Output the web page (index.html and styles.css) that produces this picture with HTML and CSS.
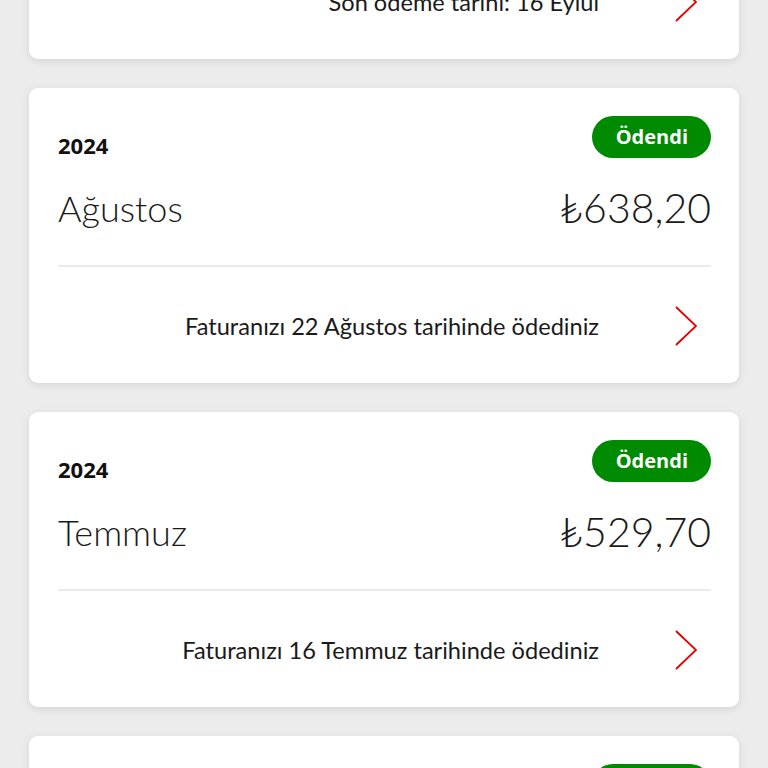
FILE: index.html
```html
<!DOCTYPE html>
<html lang="tr">
<head>
<meta charset="utf-8">
<link rel="stylesheet" href="styles.css">
</head>
<body>
<main class="list">
  <section class="card">
    <div class="head">
      <span class="year">2024</span>
      <span class="badge badge-due">Ödenmedi</span>
    </div>
    <div class="row">
      <span class="month">Eylül</span>
      <span class="amount">₺640,10</span>
    </div>
    <div class="divider"></div>
    <a class="foot">
      <span class="foot-text">Son ödeme tarihi: 16 Eylül</span>
      <svg class="chev" viewBox="0 0 22 40" width="22" height="40"><path d="M1 1 L21 20 L1 39" fill="none" stroke="#e60000" stroke-width="1.8"/></svg>
    </a>
  </section>

  <section class="card">
    <div class="head">
      <span class="year">2024</span>
      <span class="badge">Ödendi</span>
    </div>
    <div class="row">
      <span class="month">Ağustos</span>
      <span class="amount">₺638,20</span>
    </div>
    <div class="divider"></div>
    <a class="foot">
      <span class="foot-text">Faturanızı 22 Ağustos tarihinde ödediniz</span>
      <svg class="chev" viewBox="0 0 22 40" width="22" height="40"><path d="M1 1 L21 20 L1 39" fill="none" stroke="#e60000" stroke-width="1.8"/></svg>
    </a>
  </section>

  <section class="card">
    <div class="head">
      <span class="year">2024</span>
      <span class="badge">Ödendi</span>
    </div>
    <div class="row">
      <span class="month">Temmuz</span>
      <span class="amount">₺529,70</span>
    </div>
    <div class="divider"></div>
    <a class="foot">
      <span class="foot-text">Faturanızı 16 Temmuz tarihinde ödediniz</span>
      <svg class="chev" viewBox="0 0 22 40" width="22" height="40"><path d="M1 1 L21 20 L1 39" fill="none" stroke="#e60000" stroke-width="1.8"/></svg>
    </a>
  </section>

  <section class="card">
    <div class="head">
      <span class="year">2024</span>
      <span class="badge">Ödendi</span>
    </div>
    <div class="row">
      <span class="month">Haziran</span>
      <span class="amount">₺512,40</span>
    </div>
    <div class="divider"></div>
    <a class="foot">
      <span class="foot-text">Faturanızı 17 Haziran tarihinde ödediniz</span>
      <svg class="chev" viewBox="0 0 22 40" width="22" height="40"><path d="M1 1 L21 20 L1 39" fill="none" stroke="#e60000" stroke-width="1.8"/></svg>
    </a>
  </section>
</main>
</body>
</html>
```
FILE: styles.css
```css
html, body {
  margin: 0;
  padding: 0;
  background: #ececec;
  overflow: hidden;
  height: 768px;
}
body {
  font-family: "Open Sans", "Noto Sans", sans-serif;
  color: #1a1a1a;
}
.list {
  display: flex;
  flex-direction: column;
  gap: 29px;
  padding: 0 29px;
  margin-top: -236px;
}
.card {
  background: #fff;
  border-radius: 9px;
  box-shadow: 0 2px 8px rgba(0, 0, 0, 0.10);
  padding: 28px 28px 0 29px;
  height: 267px;
  display: flex;
  flex-direction: column;
}
.head {
  display: flex;
  justify-content: space-between;
  align-items: flex-start;
  height: 42px;
}
.year {
  font-size: 22px;
  font-weight: 700;
  line-height: 22px;
  margin-top: 18px;
  color: #111;
}
.badge {
  background: #008a00;
  color: #fff;
  font-weight: 700;
  font-size: 20px;
  line-height: 42px;
  height: 42px;
  padding: 0 23px 0 24px;
  border-radius: 21px;
}
.badge-due {
  background: #e60000;
}
.row {
  display: flex;
  justify-content: space-between;
  align-items: center;
  margin-top: 28px;
  height: 44px;
}
.month {
  font-family: Lato, "Open Sans", sans-serif;
  font-size: 36px;
  font-weight: 300;
  line-height: 44px;
}
.amount {
  font-family: Lato, "Open Sans", sans-serif;
  font-size: 41px;
  font-weight: 300;
  line-height: 44px;
}
.divider {
  height: 2px;
  background: #ebebeb;
  margin-top: 35px;
}
.foot {
  display: flex;
  align-items: center;
  justify-content: flex-end;
  box-sizing: border-box;
  height: 116px;
  padding: 2px 14px 0 0;
}
.foot-text {
  font-family: Lato, "Open Sans", sans-serif;
  font-size: 23.6px;
  line-height: 28px;
  margin-right: 76px;
}
.chev {
  display: block;
}
```
